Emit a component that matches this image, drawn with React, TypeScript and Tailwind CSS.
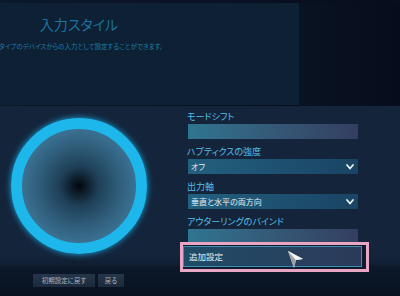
import React from 'react';

const jp = "font-['Noto_Sans_CJK_JP','Noto_Sans',sans-serif] [font-feature-settings:'palt']";

const Chevron: React.FC = () => (
  <svg width="8" height="6" viewBox="0 0 8 6" className="shrink-0">
    <polyline points="1,1 4,4.5 7,1" fill="none" stroke="#e8f2f8" strokeWidth="1.8" strokeLinecap="round" strokeLinejoin="round" />
  </svg>
);

const Label: React.FC<{ text: string; first?: boolean }> = ({ text, first }) => (
  <div className={`h-[13px] leading-[13px] text-[9px] text-[#56bfe9] whitespace-nowrap ${first ? '' : 'mt-[6px]'}`}>{text}</div>
);

const EmptyField: React.FC = () => (
  <div className="mt-[1px] ml-[1px] w-[170px] h-[15px] bg-gradient-to-r from-[#2f7590] to-[#343e5f]" />
);

const Dropdown: React.FC<{ value: string }> = ({ value }) => (
  <div className="mt-[1px] ml-[1px] w-[170px] h-[15px] flex items-center justify-between pl-[3px] pr-[4px] bg-gradient-to-r from-[#22607f] to-[#1a4464]">
    <span className="text-[8px] leading-none text-[#e2eef5] whitespace-nowrap">{value}</span>
    <Chevron />
  </div>
);

const Cursor: React.FC = () => (
  <svg width="18" height="20" viewBox="0 0 18 20" className="absolute left-[286px] top-[249px] z-20">
    <polygon points="2,2 17,10 10,11 8,19" fill="#d9dde0" />
    <polygon points="2,2 10,11 8,19" fill="#9aa2a8" />
    <polygon points="2,2 17,10 10,11" fill="#f1f3f4" />
  </svg>
);

const App: React.FC = () => {
  return (
    <div className={`relative w-[400px] h-[296px] overflow-hidden flex flex-col bg-[#0a1322] ${jp}`}>
      {/* top header */}
      <div className="h-[106px] shrink-0 pt-[3px] flex bg-gradient-to-r from-[#0c192b] to-[#070d1c]">
        <div className="w-[299px] h-[102px] bg-[#0d2034] overflow-hidden">
          <div className="w-[158px] pt-[12px] text-center text-[14px] leading-[18px] text-[#1c72a0] whitespace-nowrap">入力スタイル</div>
          <div className="mt-[9px] -ml-[1px] text-[6.5px] leading-[9px] text-[#1f7cab] whitespace-nowrap">タイプのデバイスからの入力として設定することができます。</div>
        </div>
        <div className="flex-1 bg-gradient-to-r from-[#0a1322] to-[#060c1b]" />
      </div>

      {/* main panel */}
      <div className="h-[160px] shrink-0 flex bg-[linear-gradient(to_bottom,#14253b_93%,#0f1d30_100%)]">
        <div className="w-[158px] flex items-center justify-center">
          <div className="w-[136px] h-[136px] rounded-full border-[11px] border-[#1db7ec] shadow-[0_0_6px_#1aa8e0] bg-[radial-gradient(circle_closest-side,#02070d_0%,#1f4058_35%,#2f5d7a_70%,#3b7192_100%)]" />
        </div>
        <div className="ml-[29px] pt-[4px]">
          <Label text="モードシフト" first />
          <EmptyField />
          <Label text="ハプティクスの強度" />
          <Dropdown value="オフ" />
          <Label text="出力軸" />
          <Dropdown value="垂直と水平の両方向" />
          <Label text="アウターリングのバインド" />
          <EmptyField />
          <div className="relative z-10 -mt-[2px] -ml-[7px] w-[189px] h-[30px] border-[3px] border-[#e8a6c4] bg-[#0f1a2a] pt-[1px]">
            <div className="w-[179px] h-[21px] border border-[#3f8fb4] bg-gradient-to-r from-[#1d4c67] to-[#2b3a59] flex items-center pl-[5px]">
              <span className="text-[8.5px] leading-none text-[#e6f0f5]">追加設定</span>
            </div>
          </div>
        </div>
      </div>

      {/* bottom bar */}
      <div className="flex-1 flex items-start gap-[3px] pt-[8px] pl-[33px] bg-gradient-to-b from-[#0c192b] to-[#08111f]">
        <div className="w-[62px] h-[13px] flex items-center justify-center bg-gradient-to-b from-[#26364a] to-[#1b293b] text-[6.5px] text-[#aab4c0]">初期設定に戻す</div>
        <div className="w-[26px] h-[13px] flex items-center justify-center bg-gradient-to-b from-[#26364a] to-[#1b293b] text-[6.5px] text-[#aab4c0]">戻る</div>
      </div>

      <Cursor />
    </div>
  );
};

export default App;
